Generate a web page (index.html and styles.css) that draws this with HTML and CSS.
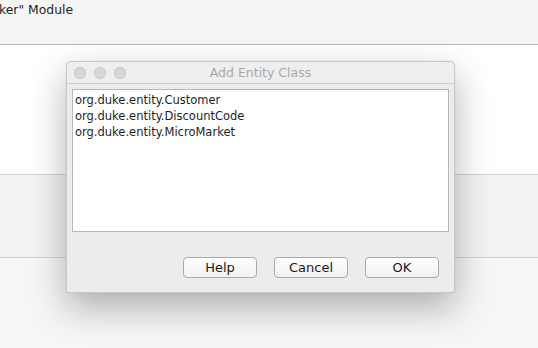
FILE: index.html
```html
<!DOCTYPE html>
<html lang="en">
<head>
    <meta charset="UTF-8">
    <title>Add Entity Class</title>
    <link rel="stylesheet" href="styles.css">
</head>
<body>
    <div class="wizard">
        <div class="wizard-header">ker" Module</div>
        <div class="wizard-body"></div>
        <div class="wizard-panel"></div>
        <div class="wizard-footer"></div>
    </div>

    <div class="dialog">
        <div class="titlebar">
            <div class="lights">
                <span class="light"></span>
                <span class="light"></span>
                <span class="light"></span>
            </div>
            <div class="title">Add Entity Class</div>
        </div>
        <div class="dialog-content">
            <ul class="class-list">
                <li>org.duke.entity.Customer</li>
                <li>org.duke.entity.DiscountCode</li>
                <li>org.duke.entity.MicroMarket</li>
            </ul>
            <div class="buttons">
                <button class="btn">Help</button>
                <button class="btn">Cancel</button>
                <button class="btn">OK</button>
            </div>
        </div>
    </div>
</body>
</html>
```

FILE: styles.css
```css
body {
    margin: 0;
    font-family: "DejaVu Sans", "Liberation Sans", sans-serif;
    font-size: 11.5px;
    color: #1e1e1e;
    background: #f6f6f6;
    overflow: hidden;
}

.wizard {
    display: flex;
    flex-direction: column;
    height: 348px;
}

.wizard-header {
    height: 45px;
    background: #f5f5f5;
    border-bottom: 1px solid #b9b9b9;
    font-size: 12.4px;
    padding-top: 2px;
    box-sizing: border-box;
    margin-left: -1px;
}

.wizard-body {
    height: 129px;
    background: #fff;
    border-bottom: 1px solid #d2d2d2;
}

.wizard-panel {
    height: 82px;
    background: #f3f3f3;
    border-bottom: 1px solid #d2d2d2;
}

.wizard-footer {
    flex: 1;
    background: #f6f6f6;
}

.dialog {
    position: absolute;
    left: 66px;
    top: 61px;
    width: 389px;
    height: 232px;
    box-sizing: border-box;
    background: #ececec;
    border: 1px solid #c9c9c9;
    border-radius: 5px 5px 3px 3px;
    box-shadow: 0 14px 36px rgba(0, 0, 0, 0.3), 0 0 1px rgba(0, 0, 0, 0.2);
    display: flex;
    flex-direction: column;
}

.titlebar {
    height: 21px;
    border-bottom: 1px solid #cdcdcd;
    background: #eeeeee;
    border-radius: 5px 5px 0 0;
    display: flex;
    align-items: center;
    position: relative;
}

.lights {
    display: flex;
    gap: 8px;
    padding-left: 7px;
    padding-top: 1px;
}

.light {
    width: 12px;
    height: 12px;
    border-radius: 50%;
    background: #d8d8d8;
    box-shadow: inset 0 0 0 1px #cbcbcb;
}

.title {
    position: absolute;
    left: 0;
    right: 0;
    text-align: center;
    font-size: 12.5px;
    color: #a8a8a8;
}

.dialog-content {
    flex: 1;
    display: flex;
    flex-direction: column;
    padding: 5px 5px 14px 5px;
}

.class-list {
    list-style: none;
    margin: 0;
    padding: 2px 2px;
    height: 143px;
    box-sizing: border-box;
    background: #fff;
    border: 1px solid #b7b7b7;
}

.class-list li {
    height: 16px;
    line-height: 16px;
}

.buttons {
    display: flex;
    justify-content: flex-end;
    gap: 17px;
    margin-top: auto;
    padding-right: 10px;
}

.btn {
    width: 74px;
    height: 21px;
    font-family: "DejaVu Sans", "Liberation Sans", sans-serif;
    font-size: 13px;
    color: #1a1a1a;
    background: linear-gradient(#ffffff, #f1f1f1);
    border: 1px solid #a9a9a9;
    border-radius: 4px;
    padding: 0;
}
```
